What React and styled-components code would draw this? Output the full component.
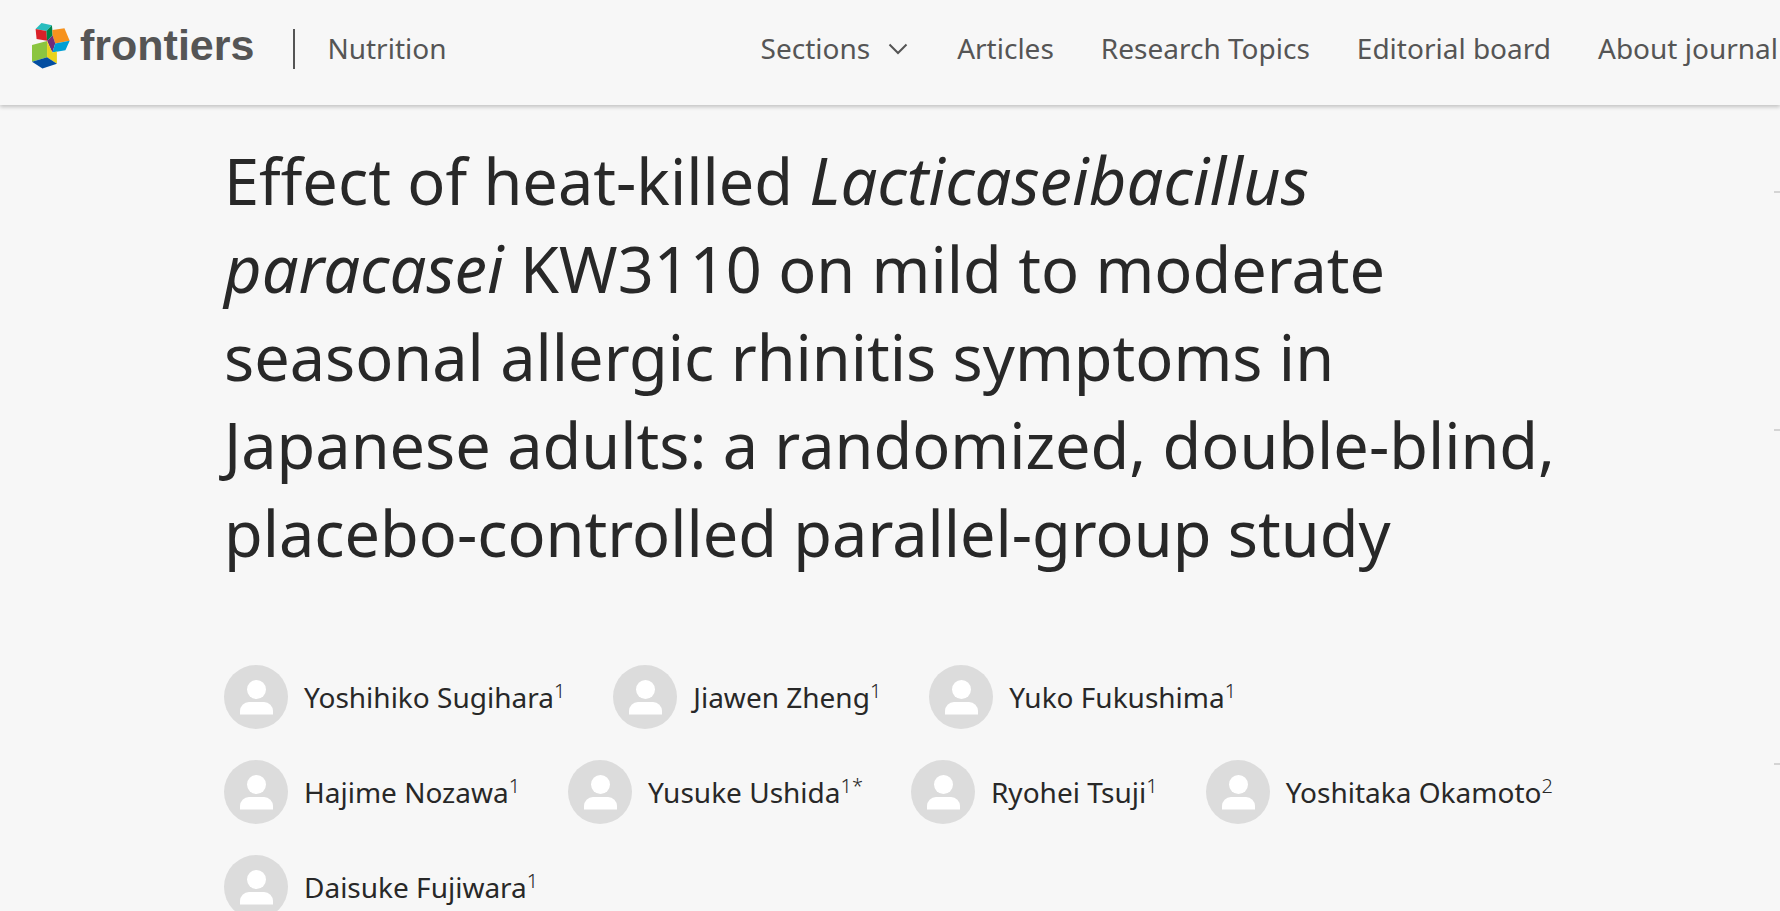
import styled, { createGlobalStyle } from 'styled-components'

const GlobalStyle = createGlobalStyle`
  * {
    box-sizing: border-box;
  }

  body {
    margin: 0;
    overflow: hidden;
    background-color: #f7f7f7;
    color: #282828;
    font-family: 'Noto Sans', 'Open Sans', sans-serif;
    font-size: 28px;
  }

  a {
    color: inherit;
    text-decoration: none;
  }
`

const Header = styled.header`
  display: flex;
  align-items: flex-end;
  justify-content: space-between;
  padding: 23px 2px 36px 32px;
  line-height: 38px;
  color: #555;
  box-shadow: 0 2px 4px rgba(0, 0, 0, 0.22);
`

const Brand = styled.div`
  display: flex;
  align-items: flex-end;
`

const LogoLink = styled.a`
  display: flex;
  align-items: flex-start;
  gap: 10px;
`

const LogoMark = styled.svg`
  width: 38px;
  height: 46px;
`

const Wordmark = styled.span`
  font-family: 'Liberation Sans', Arial, sans-serif;
  font-size: 43px;
  font-weight: 700;
  line-height: 44px;
`

const Journal = styled.a`
  margin-left: 39px;
  padding: 0 0 2px 32px;
  border-left: 2px solid #555;
`

const Nav = styled.nav`
  display: flex;
  gap: 47px;
  padding-bottom: 2px;
  white-space: nowrap;
`

const NavButton = styled.button`
  display: flex;
  align-items: center;
  gap: 16px;
  padding: 0;
  border: 0;
  background: none;
  color: inherit;
  font: inherit;
  cursor: pointer;
`

const Chevron = styled.svg`
  width: 24px;
  height: 24px;
  fill: none;
  stroke: currentColor;
  stroke-width: 2;
`

const Page = styled.div`
  display: flex;
  align-items: flex-start;
`

const Article = styled.main`
  flex: 1;
  padding: 32px 200px 40px 224px;
`

const Title = styled.h1`
  margin: 0 0 88px;
  font-size: 63px;
  font-weight: 400;
  line-height: 88px;

  i {
    font-size: 65px;
    line-height: 1;
  }
`

const AuthorList = styled.ul`
  display: flex;
  flex-wrap: wrap;
  gap: 31px 48px;
  margin: 0;
  padding: 0;
  list-style: none;
`

const AuthorItem = styled.li`
  display: flex;
  align-items: center;
  gap: 16px;
  line-height: 38px;
  white-space: nowrap;

  sup {
    font-size: 20px;
    font-weight: 300;
    line-height: 0;
    vertical-align: 10px;
  }
`

const Avatar = styled.svg`
  width: 64px;
  height: 64px;
  border-radius: 50%;
  background-color: #dcdcdc;
  fill: #fff;
`

const Aside = styled.aside`
  width: 6px;
  padding-top: 86px;
`

const AsideSection = styled.div`
  height: ${({ $height }) => $height}px;
  border-top: 2px solid #d4d4d4;
`

const authors = [
  { name: 'Yoshihiko Sugihara', mark: '1' },
  { name: 'Jiawen Zheng', mark: '1' },
  { name: 'Yuko Fukushima', mark: '1' },
  { name: 'Hajime Nozawa', mark: '1' },
  { name: 'Yusuke Ushida', mark: '1*' },
  { name: 'Ryohei Tsuji', mark: '1' },
  { name: 'Yoshitaka Okamoto', mark: '2' },
  { name: 'Daisuke Fujiwara', mark: '1' }
]

const links = ['Articles', 'Research Topics', 'Editorial board', 'About journal']

const Logo = () => (
  <LogoMark viewBox="0 0 116 140" aria-hidden="true">
    <polygon fill="#28bdbe" points="29,0 61,7 44,24 11,18" />
    <polygon fill="#da2128" points="11,18 44,24 46,54 14,49" />
    <polygon fill="#00844a" points="44,24 61,7 63,38 46,54" />
    <polygon fill="#f6921e" points="62,21 99,16 115,54 71,62 63,38" />
    <polygon fill="#712c7a" points="46,54 63,38 71,62 62,90" />
    <polygon fill="#009fd4" points="71,62 115,54 102,83 62,90" />
    <polygon fill="#8bc540" points="0,67 46,55 46,104 0,118" />
    <polygon fill="#ead31c" points="46,55 62,90 76,87 76,124 46,104" />
    <polygon fill="#034ea1" points="0,118 46,104 76,124 32,139" />
  </LogoMark>
)

const Author = ({ name, mark }) => (
  <AuthorItem>
    <Avatar viewBox="0 0 64 64" aria-hidden="true">
      <circle cx="32.5" cy="24.5" r="9.5" />
      <path d="M16 49.5V46a9 9 0 0 1 9-9h15a9 9 0 0 1 9 9v3.5z" />
    </Avatar>
    <span>
      {name}
      <sup>{mark}</sup>
    </span>
  </AuthorItem>
)

const App = () => (
  <>
    <GlobalStyle />
    <Header>
      <Brand>
        <LogoLink href="#">
          <Logo />
          <Wordmark>frontiers</Wordmark>
        </LogoLink>
        <Journal href="#">Nutrition</Journal>
      </Brand>
      <Nav>
        <NavButton type="button">
          Sections
          <Chevron viewBox="0 0 24 24" aria-hidden="true">
            <path d="M3.5 8.5l8.5 8.5 8.5-8.5" />
          </Chevron>
        </NavButton>
        {links.map(link => (
          <a key={link} href="#">{link}</a>
        ))}
      </Nav>
    </Header>
    <Page>
      <Article>
        <Title>
          Effect of heat-killed <i>Lacticaseibacillus</i> <i>paracasei</i> KW3110 on
          mild to moderate seasonal allergic rhinitis symptoms in Japanese adults: a
          randomized, double-blind, placebo-controlled parallel-group study
        </Title>
        <AuthorList>
          {authors.map(author => (
            <Author key={author.name} {...author} />
          ))}
        </AuthorList>
      </Article>
      <Aside>
        <AsideSection $height={238} />
        <AsideSection $height={334} />
        <AsideSection $height={100} />
      </Aside>
    </Page>
  </>
)

export default App
